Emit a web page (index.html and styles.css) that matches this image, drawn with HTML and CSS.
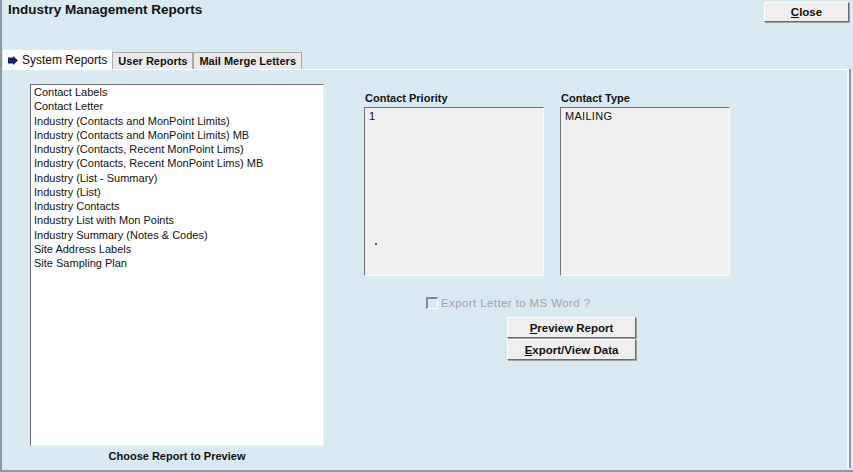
FILE: index.html
```html
<!DOCTYPE html>
<html lang="en">
<head>
  <meta charset="UTF-8">
  <title>Industry Management Reports</title>
  <link rel="stylesheet" href="styles.css">
</head>
<body>
  <div class="window">
    <div class="header">
      <h1 class="title">Industry Management Reports</h1>
      <button class="btn close-btn"><u>C</u>lose</button>
    </div>

    <div class="tabs">
      <div class="tab active">
        <svg width="10" height="9" viewBox="0 0 10 9"><path d="M0 1.5 L5 1.5 L5 0 L10 4.5 L5 9 L5 7.5 L0 7.5 Z" fill="#1a1f6e"/></svg>
        System Reports
      </div>
      <div class="tab">User Reports</div>
      <div class="tab">Mail Merge Letters</div>
    </div>

    <div class="panel">
      <div class="report-col">
        <ul class="report-list">
          <li>Contact Labels</li>
          <li>Contact Letter</li>
          <li>Industry (Contacts and MonPoint Limits)</li>
          <li>Industry (Contacts and MonPoint Limits) MB</li>
          <li>Industry (Contacts, Recent MonPoint Lims)</li>
          <li>Industry (Contacts, Recent MonPoint Lims) MB</li>
          <li>Industry (List - Summary)</li>
          <li>Industry (List)</li>
          <li>Industry Contacts</li>
          <li>Industry List with Mon Points</li>
          <li>Industry Summary (Notes &amp; Codes)</li>
          <li>Site Address Labels</li>
          <li>Site Sampling Plan</li>
        </ul>
        <div class="caption">Choose Report to Preview</div>
      </div>

      <div class="options-col">
        <div class="pickers">
          <div class="picker">
            <div class="label">Contact Priority</div>
            <div class="pick-box">
              <div>1</div>
              <span class="dot"></span>
            </div>
          </div>
          <div class="picker">
            <div class="label">Contact Type</div>
            <div class="pick-box">
              <div>MAILING</div>
            </div>
          </div>
        </div>

        <label class="check-row">
          <span class="checkbox"></span>
          Export Letter to MS Word ?
        </label>

        <div class="actions">
          <button class="btn action-btn"><u>P</u>review Report</button>
          <button class="btn action-btn"><u>E</u>xport/View Data</button>
        </div>
      </div>
    </div>
  </div>
</body>
</html>
```

FILE: styles.css
```css
body {
  margin: 0;
  font-family: 'Liberation Sans', Arial, sans-serif;
  background-color: #d9eaf3;
  color: #111;
}

.window {
  width: 853px;
  height: 472px;
  box-sizing: border-box;
  border-left: 2px solid #8c9aa3;
  border-bottom: 2px solid #8c9aa3;
}

.header {
  display: flex;
  justify-content: space-between;
  align-items: flex-start;
  height: 49px;
  padding: 2px 4px 0 6px;
}

.title {
  margin: 0;
  font-size: 13.5px;
  font-weight: bold;
  line-height: 16px;
}

.btn {
  font-family: 'Liberation Sans', Arial, sans-serif;
  font-size: 11.5px;
  font-weight: bold;
  color: #111;
  background-color: #efefef;
  border: 1px solid;
  border-color: #ffffff #6b6b6b #6b6b6b #ffffff;
  box-shadow: 1px 1px 0 #a0a0a0;
  padding: 0;
  cursor: pointer;
}

.close-btn {
  width: 85px;
  height: 20px;
}

.tabs {
  display: flex;
  align-items: flex-end;
  height: 18px;
  padding-left: 1px;
}

.tab {
  display: flex;
  align-items: center;
  gap: 5px;
  height: 16px;
  padding: 0 5px;
  font-size: 11px;
  font-weight: bold;
  background-color: #ebebeb;
  border: 1px solid #a9a9a9;
  border-bottom: none;
}

.tab.active {
  height: 18px;
  padding: 0 4px 0 4px;
  gap: 4px;
  font-size: 12px;
  font-weight: normal;
  background-color: #fbfbfb;
  border-color: #ffffff;
}

.panel {
  display: flex;
  gap: 40px;
  height: 399px;
  padding: 14px 0 0 28px;
  box-sizing: border-box;
  width: 847px;
  border-top: 1px solid #ffffff;
  border-right: 2px solid #f4f9fb;
  box-shadow: 2px 0 0 #8c9aa3;
}

.report-col {
  width: 294px;
}

.report-list {
  list-style: none;
  margin: 0;
  padding: 0 3px;
  height: 362px;
  box-sizing: border-box;
  background-color: #ffffff;
  border: 1px solid;
  border-color: #6f6f6f #f0f0f0 #f0f0f0 #6f6f6f;
  font-size: 11px;
  line-height: 14.25px;
}

.caption {
  margin-top: 4px;
  text-align: center;
  font-size: 11px;
  font-weight: bold;
}

.options-col {
  padding-top: 8px;
}

.pickers {
  display: flex;
  gap: 16px;
}

.label {
  font-size: 11px;
  font-weight: bold;
  padding-left: 1px;
  margin-bottom: 3px;
}

.pick-box {
  position: relative;
  width: 180px;
  height: 169px;
  box-sizing: border-box;
  padding: 2px 4px;
  background-color: #f0f0f0;
  border: 1px solid;
  border-color: #737373 #fafafa #fafafa #737373;
  font-size: 11px;
  letter-spacing: 0.3px;
}

.picker + .picker .pick-box {
  width: 170px;
}

.dot {
  position: absolute;
  left: 10px;
  top: 135px;
  width: 2px;
  height: 2px;
  background-color: #4048c0;
}

.check-row {
  display: flex;
  align-items: center;
  gap: 3px;
  margin: 21px 0 0 62px;
  font-size: 11.5px;
  letter-spacing: 0.4px;
  color: #a3a3a3;
}

.checkbox {
  width: 9px;
  height: 9px;
  border-top: 2px solid #8a8a8a;
  border-left: 2px solid #8a8a8a;
  border-right: 1px solid #ffffff;
  border-bottom: 1px solid #ffffff;
}

.actions {
  display: flex;
  flex-direction: column;
  width: 129px;
  margin: 8px 0 0 143px;
}

.action-btn {
  height: 21px;
  font-size: 11.5px;
  margin-bottom: 1px;
}
```
